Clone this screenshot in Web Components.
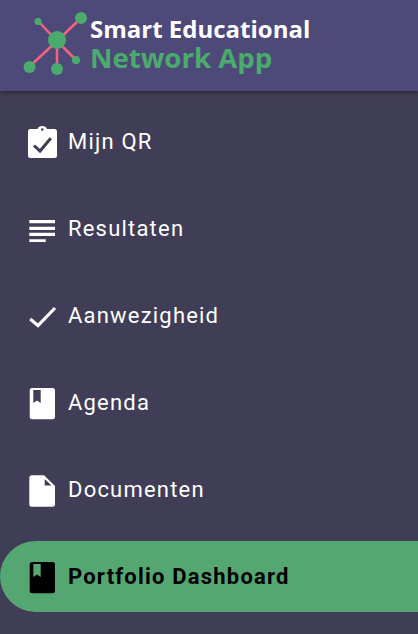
<!DOCTYPE html>
<html>
<head>
<meta charset="utf-8">
<style>
  html, body { margin: 0; height: 100%; background: #403d56; overflow: hidden; }
  body { font-family: Roboto, sans-serif; }
</style>
</head>
<body>
<app-menu>
  <app-header slot="header"></app-header>
  <menu-row icon="clipboard">Mijn QR</menu-row>
  <menu-row icon="lines">Resultaten</menu-row>
  <menu-row icon="check">Aanwezigheid</menu-row>
  <menu-row icon="book">Agenda</menu-row>
  <menu-row icon="file">Documenten</menu-row>
  <menu-row icon="book" active>Portfolio Dashboard</menu-row>
</app-menu>

<script>
(function() {

  /* Icons, all on a 34x34 box */
  const ICONS = {
    clipboard: `<path fill="currentColor" d="M4.500 4H11.500C12 2 14 1 16.300 1S20.500 2 21 4H28.500A2.500 2.500 0 0 1 31 6.500V30.500A2.500 2.500 0 0 1 28.500 33H4.500A2.500 2.500 0 0 1 2 30.500V6.500A2.500 2.500 0 0 1 4.500 4Z"/><circle fill="#403d56" cx="16.300" cy="4.500" r="1.300"/><path fill="none" stroke="#403d56" stroke-width="3" d="M8 20.500 14 26 24.800 13.300"/>`,
    lines: `<path fill="currentColor" d="M3.300 8H29V11.300H3.300ZM3.300 14.700H29V18H3.300ZM3.300 20.700H29V24H3.300ZM3.300 27.300H19.700V30H3.300Z"/>`,
    check: `<path fill="none" stroke="currentColor" stroke-width="3.200" d="M4.200 20 12 26.500 29 9"/>`,
    book: `<path fill="currentColor" fill-rule="evenodd" d="M6.200 2H26.500A2.500 2.500 0 0 1 29 4.500V30.800A2.500 2.500 0 0 1 26.500 33.300H6.200A2.500 2.500 0 0 1 3.700 30.800V4.500A2.500 2.500 0 0 1 6.200 2ZM7.300 4V17L11 14.500 14.700 17V4Z"/>`,
    file: `<path fill="currentColor" fill-rule="evenodd" d="M5.800 2.300H18L29 13V31.200A2.500 2.500 0 0 1 26.500 33.700H5.800A2.500 2.500 0 0 1 3.300 31.200V4.800A2.500 2.500 0 0 1 5.800 2.300ZM18.700 6V12.500H25.500Z"/>`
  };

  /* Header */
  var headerTemplate = document.createElement("template");
  headerTemplate.innerHTML = `
    <style>
      :host {
        display: flex;
        align-items: center;
        height: 91px;
        padding-left: 22px;
        box-sizing: border-box;
        background: #4d4a7a;
        box-shadow: 0 2px 4px rgba(0, 0, 0, 0.35);
        position: relative;
      }
      svg { width: 68px; height: 66px; flex: none; margin-top: -1px; }
      .name {
        font-family: "Open Sans", sans-serif;
        font-weight: 700;
        white-space: nowrap;
        margin-top: -4px;
      }
      .top { color: #fff; font-size: 24px; line-height: 26px; }
      .bottom { color: #4bab6d; font-size: 27.600px; line-height: 30px; }
    </style>
    <svg viewBox="22 12 68 66">
      <g stroke="#f2647e" stroke-width="2.500">
        <path d="M38 21 57 41M81 18 57 41M29 67 57 41M57 70V41M76 60 57 41"/>
      </g>
      <g fill="#4bab6d">
        <circle cx="57" cy="40" r="9"/>
        <circle cx="38" cy="21.500" r="3.500"/>
        <circle cx="81" cy="18" r="6"/>
        <circle cx="29.500" cy="67" r="6"/>
        <circle cx="57" cy="69" r="6"/>
        <circle cx="76" cy="60" r="4"/>
      </g>
    </svg>
    <div class="name">
      <div class="top">Smart Educational</div>
      <div class="bottom">Network App</div>
    </div>
  `;

  class AppHeader extends HTMLElement {
    constructor() {
      super();
      this.attachShadow({ mode: "open" }).appendChild(headerTemplate.content.cloneNode(true));
    }
  }

  /* Menu row */
  var rowTemplate = document.createElement("template");
  rowTemplate.innerHTML = `
    <style>
      :host {
        display: flex;
        align-items: center;
        height: 71px;
        padding-left: 26px;
        color: #fff;
        font-size: 22px;
        letter-spacing: 1.200px;
      }
      :host([active]) {
        background: #55a772;
        color: #000;
        font-weight: 700;
        border-radius: 36px 0 0 36px;
      }
      svg { width: 34px; height: 34px; flex: none; margin-right: 8px; }
    </style>
    <svg viewBox="0 0 34 34"></svg>
    <slot></slot>
  `;

  class MenuRow extends HTMLElement {
    constructor() {
      super();
      this.attachShadow({ mode: "open" }).appendChild(rowTemplate.content.cloneNode(true));
    }

    connectedCallback() {
      this.shadowRoot.querySelector("svg").innerHTML = ICONS[this.getAttribute("icon")];
    }
  }

  /* Whole menu */
  var menuTemplate = document.createElement("template");
  menuTemplate.innerHTML = `
    <style>
      :host { display: block; height: 634px; background: #403d56; }
      .rows {
        display: flex;
        flex-direction: column;
        gap: 16px;
        padding-top: 15px;
      }
    </style>
    <slot name="header"></slot>
    <div class="rows"><slot></slot></div>
  `;

  class AppMenu extends HTMLElement {
    constructor() {
      super();
      this.attachShadow({ mode: "open" }).appendChild(menuTemplate.content.cloneNode(true));
    }
  }

  /* Registration */
  customElements.define("app-header", AppHeader);
  customElements.define("menu-row", MenuRow);
  customElements.define("app-menu", AppMenu);
})();
</script>
</body>
</html>
